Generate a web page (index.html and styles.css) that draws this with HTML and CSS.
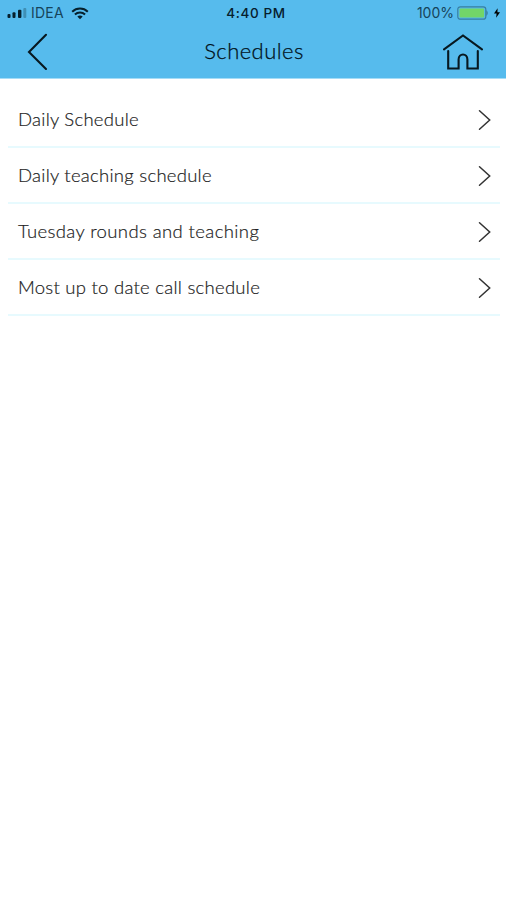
FILE: index.html
```html
<!DOCTYPE html>
<html lang="en">
<head>
<meta charset="utf-8">
<title>Schedules</title>
<link rel="stylesheet" href="styles.css">
</head>
<body>
<header class="header">
  <div class="status">
    <div class="carrier">
      <svg class="signal" width="20" height="12" viewBox="0 0 20 12"><rect x="0.5" y="7" width="3" height="4" rx="1"/><rect x="5.5" y="5.3" width="3" height="5.7" rx="1"/><rect x="11" y="2.8" width="3.4" height="8.2" rx="1"/><rect class="dim" x="16.3" y="1" width="3" height="10" rx="1"/></svg>
      <span class="network">IDEA</span>
      <svg class="wifi" width="18" height="13" viewBox="0 0 18 13"><path d="M1.2 4.7C5.6.5 12.4.5 16.8 4.7M3.9 7.5C6.8 4.8 11.2 4.8 14.1 7.5"/><path class="dot" d="M6.3 9.5Q9 7.3 11.7 9.5L9 12.3Z"/></svg>
    </div>
    <span class="clock">4:40 PM</span>
    <div class="power">
      <span class="percent">100%</span>
      <svg class="battery" width="32" height="14" viewBox="0 0 32 14"><rect class="shell" x=".8" y=".8" width="28" height="12.4" rx="2.5"/><rect class="charge" x="2.5" y="2.5" width="24.6" height="9" rx="1"/><path class="cap" d="M29.3 4Q32.3 7 29.3 10Z"/></svg>
      <svg class="bolt" width="6" height="10" viewBox="0 0 7 11"><path d="M4.2 0L0 6H3L2.5 11L7 4.5H4Z"/></svg>
    </div>
  </div>
  <nav class="nav">
    <svg class="back" width="22" height="38" viewBox="0 0 22 38"><path d="M19 1.8L2 19L19 36"/></svg>
    <h1 class="title">Schedules</h1>
    <svg class="home" width="42" height="38" viewBox="0 0 42 38"><path d="M2 16.3L21 2.5L40 16.3"/><path d="M6.2 18V35.5H16.6V26.5C16.6 19.8 25.4 19.8 25.4 26.5V35.5H35.8V18"/></svg>
  </nav>
</header>
<main class="list">
  <div class="row"><span class="label">Daily Schedule</span><svg class="chevron" width="13" height="22" viewBox="0 0 13 22"><path d="M1.5 1.8L11.7 11L1.5 20.2"/></svg></div>
  <div class="row"><span class="label">Daily teaching schedule</span><svg class="chevron" width="13" height="22" viewBox="0 0 13 22"><path d="M1.5 1.8L11.7 11L1.5 20.2"/></svg></div>
  <div class="row"><span class="label label-wide">Tuesday rounds and teaching</span><svg class="chevron" width="13" height="22" viewBox="0 0 13 22"><path d="M1.5 1.8L11.7 11L1.5 20.2"/></svg></div>
  <div class="row"><span class="label">Most up to date call schedule</span><svg class="chevron" width="13" height="22" viewBox="0 0 13 22"><path d="M1.5 1.8L11.7 11L1.5 20.2"/></svg></div>
</main>
</body>
</html>
```
FILE: styles.css
```css
* { box-sizing: border-box; }
body { margin: 0; min-height: 900px; background: #fff; color: #222; font-family: Lato, "Liberation Sans", sans-serif; }
svg { display: block; flex: none; }
.header { height: 79px; background: #56bbed; border-bottom: 1px solid #a5dcf7; }
.status { height: 26px; display: grid; grid-template-columns: 1fr auto 1fr; align-items: center; padding: 0 6px 0 7px; font: 14px/26px Inter, sans-serif; color: #16445a; }
.carrier, .power { display: flex; align-items: center; }
.power { justify-content: flex-end; }
.signal { fill: #06202d; }
.signal .dim { fill: #3f8fb5; }
.network { margin-left: 4px; letter-spacing: .2px; }
.wifi { margin-left: 7px; fill: none; stroke: #06202d; stroke-width: 2; }
.wifi .dot { fill: #06202d; stroke: none; }
.clock { padding-left: 5px; font-size: 13.5px; font-weight: 500; letter-spacing: .6px; color: #06202d; }
.percent { letter-spacing: 0; }
.battery { margin-left: 3px; }
.shell { fill: none; stroke: #397f9f; stroke-width: 1.2; }
.charge { fill: #72d568; }
.cap { fill: #397f9f; }
.bolt { margin-left: 5px; fill: #000; }
.nav { height: 52px; display: grid; grid-template-columns: 1fr auto 1fr; align-items: center; padding: 0 22px 0 27px; }
.back, .home { fill: none; stroke: #071820; stroke-width: 2.1; stroke-linecap: round; }
.home { justify-self: end; }
.title { margin: 0 3px 2px 0; font-size: 22px; line-height: 28px; font-weight: 300; letter-spacing: .45px; color: #001019; -webkit-text-stroke: .25px #001019; }
.list { padding: 13px 6px 0 8px; }
.row { height: 56px; display: flex; align-items: center; justify-content: space-between; padding: 0 9px 0 10px; border-bottom: 2px solid #e7fafe; }
.label { padding-bottom: 1px; font-size: 18.5px; line-height: 24px; font-weight: 300; letter-spacing: .26px; color: #222; -webkit-text-stroke: .2px #222; }
.label-wide { letter-spacing: .39px; }
.chevron { margin-top: 2px; fill: none; stroke: #333; stroke-width: 1.5; stroke-linecap: round; }
```
